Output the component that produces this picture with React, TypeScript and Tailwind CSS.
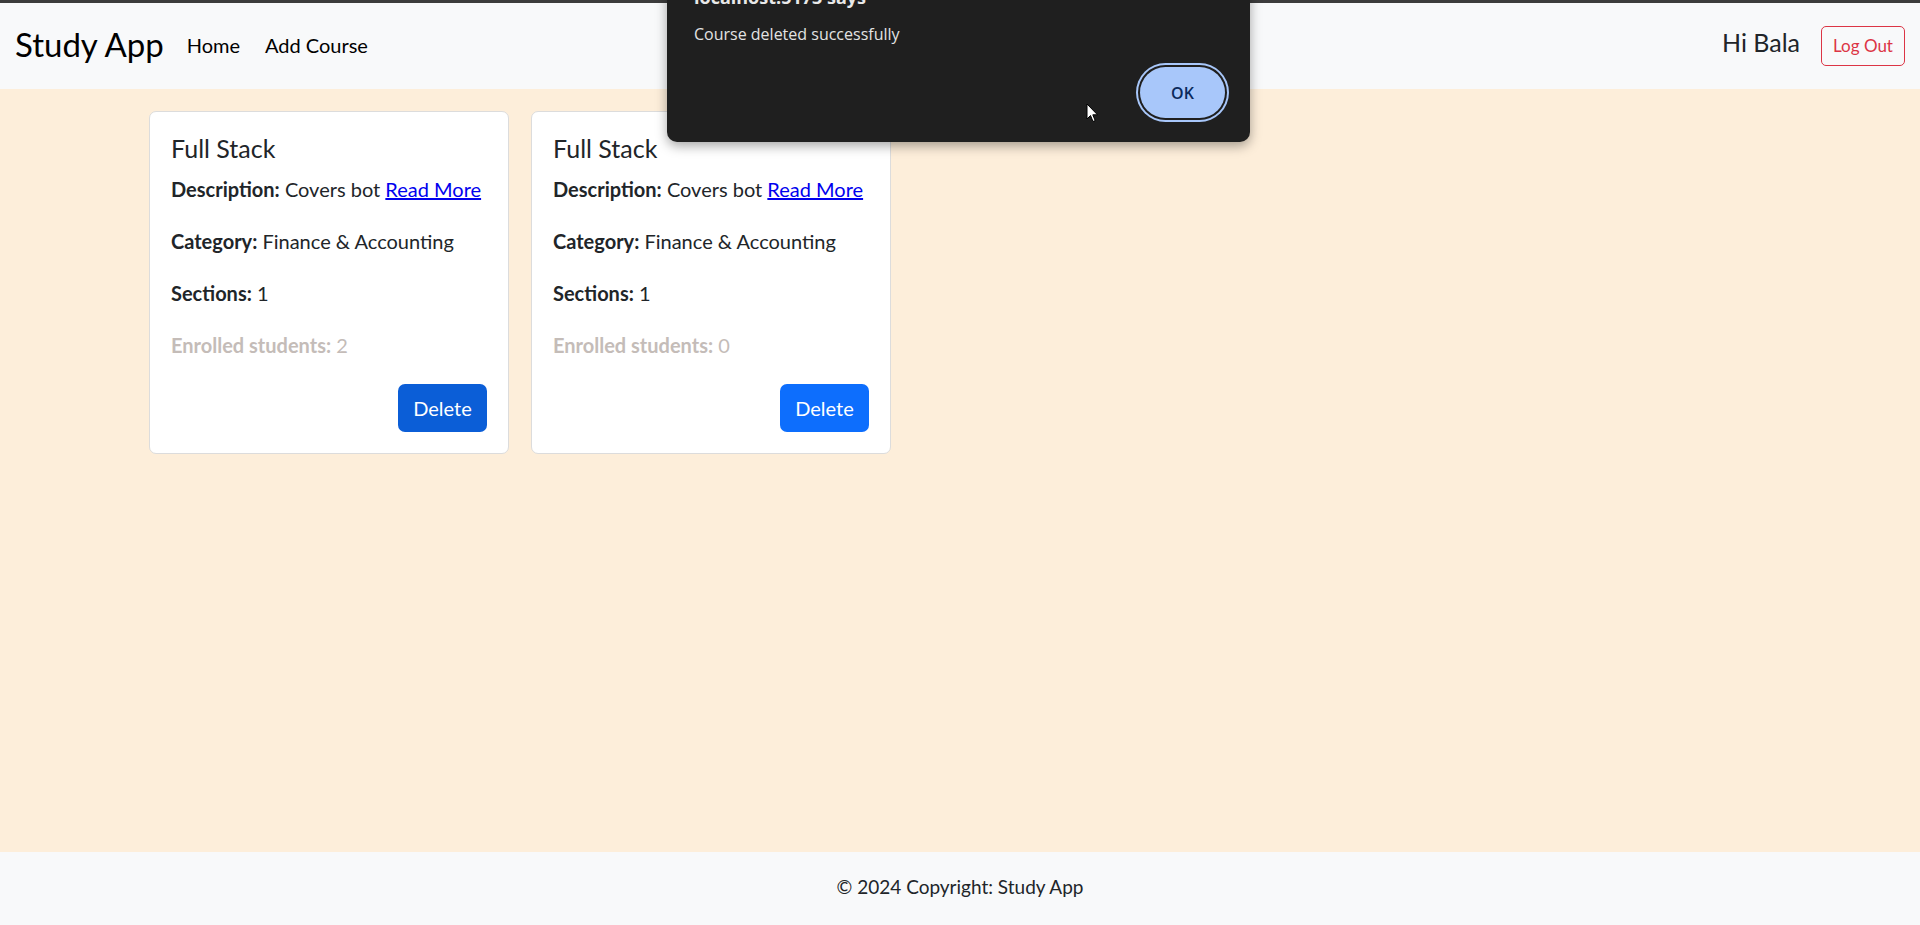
import React from "react";

type Course = {
  id: number;
  title: string;
  description: string;
  category: string;
  sections: number;
  enrolled: number;
};

const COURSES: Course[] = [
  { id: 1, title: "Full Stack", description: "Covers bot", category: "Finance & Accounting", sections: 1, enrolled: 2 },
  { id: 2, title: "Full Stack", description: "Covers bot", category: "Finance & Accounting", sections: 1, enrolled: 0 }
];

function Navbar() {
  return (
    <header className="flex h-[89px] shrink-0 items-center border-t-[3px] border-[#3c3c3c] bg-[#f8f9fa] pb-[4px] pl-[15px] pr-[15px] text-[#212529]">
      <span className="mr-[23px] text-[33px] leading-none text-black">Study App</span>
      <nav className="flex items-center gap-[25px] pt-[2px] text-[20px] text-black">
        <a href="#">Home</a>
        <a href="#">Add Course</a>
      </nav>
      <div className="ml-auto flex items-center gap-[21px]">
        <span className="pb-[2px] text-[25px]">Hi Bala</span>
        <button
          type="button"
          className="mt-[4px] h-[40px] w-[84px] rounded-[5px] border border-[#dc3545] text-[17px] text-[#dc3545]"
        >
          Log Out
        </button>
      </div>
    </header>
  );
}

function CourseCard({ course, active }: { course: Course; active?: boolean }) {
  return (
    <div className="w-[360px] rounded-[7px] border border-[#dcdcdc] bg-white p-[21px] text-[20px] leading-[30px] text-[#212529]">
      <h5 className="mb-[11px] text-[25px] leading-[30px]">{course.title}</h5>
      <p className="mb-[22px]">
        <b>Description:</b> {course.description}{" "}
        <a href="#" className="text-[#0000ee] underline">
          Read More
        </a>
      </p>
      <p className="mb-[22px]">
        <b>Category:</b> {course.category}
      </p>
      <p className="mb-[22px]">
        <b>Sections:</b> {course.sections}
      </p>
      <p className="mb-[24px] text-[#c4bcb8]">
        <b>Enrolled students:</b> {course.enrolled}
      </p>
      <div className="flex justify-end">
        <button
          type="button"
          className={`h-[48px] w-[89px] rounded-[7px] text-[20px] text-white ${
            active ? "bg-[#0b5ed7]" : "bg-[#0d6efd]"
          }`}
        >
          Delete
        </button>
      </div>
    </div>
  );
}

function AlertDialog() {
  return (
    <div
      className="absolute left-[667px] top-[-33px] w-[583px] rounded-[10px] bg-[#1f1f1f] pb-[20px] pl-[27px] pr-[21px] pt-[18px] shadow-[0_4px_12px_rgba(0,0,0,0.35)]"
      style={{ fontFamily: '"Open Sans", "Noto Sans", sans-serif' }}
    >
      <div className="text-[18px] font-bold leading-[24px] text-[#e8e8e8]">localhost:5173 says</div>
      <div className="mt-[13px] text-[16px] leading-[24px] text-[#e3e3e3]">Course deleted successfully</div>
      <div className="mt-[17px] flex justify-end">
        <button
          type="button"
          className="m-[4px] h-[51px] w-[85px] rounded-full bg-[#a8c7fa] text-[16px] font-semibold text-[#0b2a5c] shadow-[0_0_0_2px_#1f1f1f,0_0_0_4px_#a8c7fa]"
        >
          OK
        </button>
      </div>
    </div>
  );
}

function Cursor() {
  return (
    <svg className="absolute left-[1086px] top-[103px]" width="14" height="21" viewBox="0 0 14 21">
      <path d="M1 1 L1 16 L4.5 12.5 L7 18.5 L9.2 17.6 L6.8 11.8 L11.5 11.8 Z" fill="#ffffff" stroke="#000000" strokeWidth="1" strokeLinejoin="round" />
    </svg>
  );
}

export default function App() {
  return (
    <div
      className="relative flex h-[925px] flex-col overflow-hidden"
      style={{ fontFamily: 'Lato, "Open Sans", sans-serif' }}
    >
      <Navbar />
      <main className="flex-1 bg-[#fdeeda]">
        <div className="flex gap-[22px] pl-[149px] pt-[22px]">
          {COURSES.map((course, index) => (
            <CourseCard key={course.id} course={course} active={index === 0} />
          ))}
        </div>
      </main>
      <footer className="flex h-[73px] shrink-0 items-center justify-center bg-[#f8f9fa] pb-[3px] text-[19px] text-[#212529]">
        © 2024 Copyright: Study App
      </footer>
      <AlertDialog />
      <Cursor />
    </div>
  );
}
